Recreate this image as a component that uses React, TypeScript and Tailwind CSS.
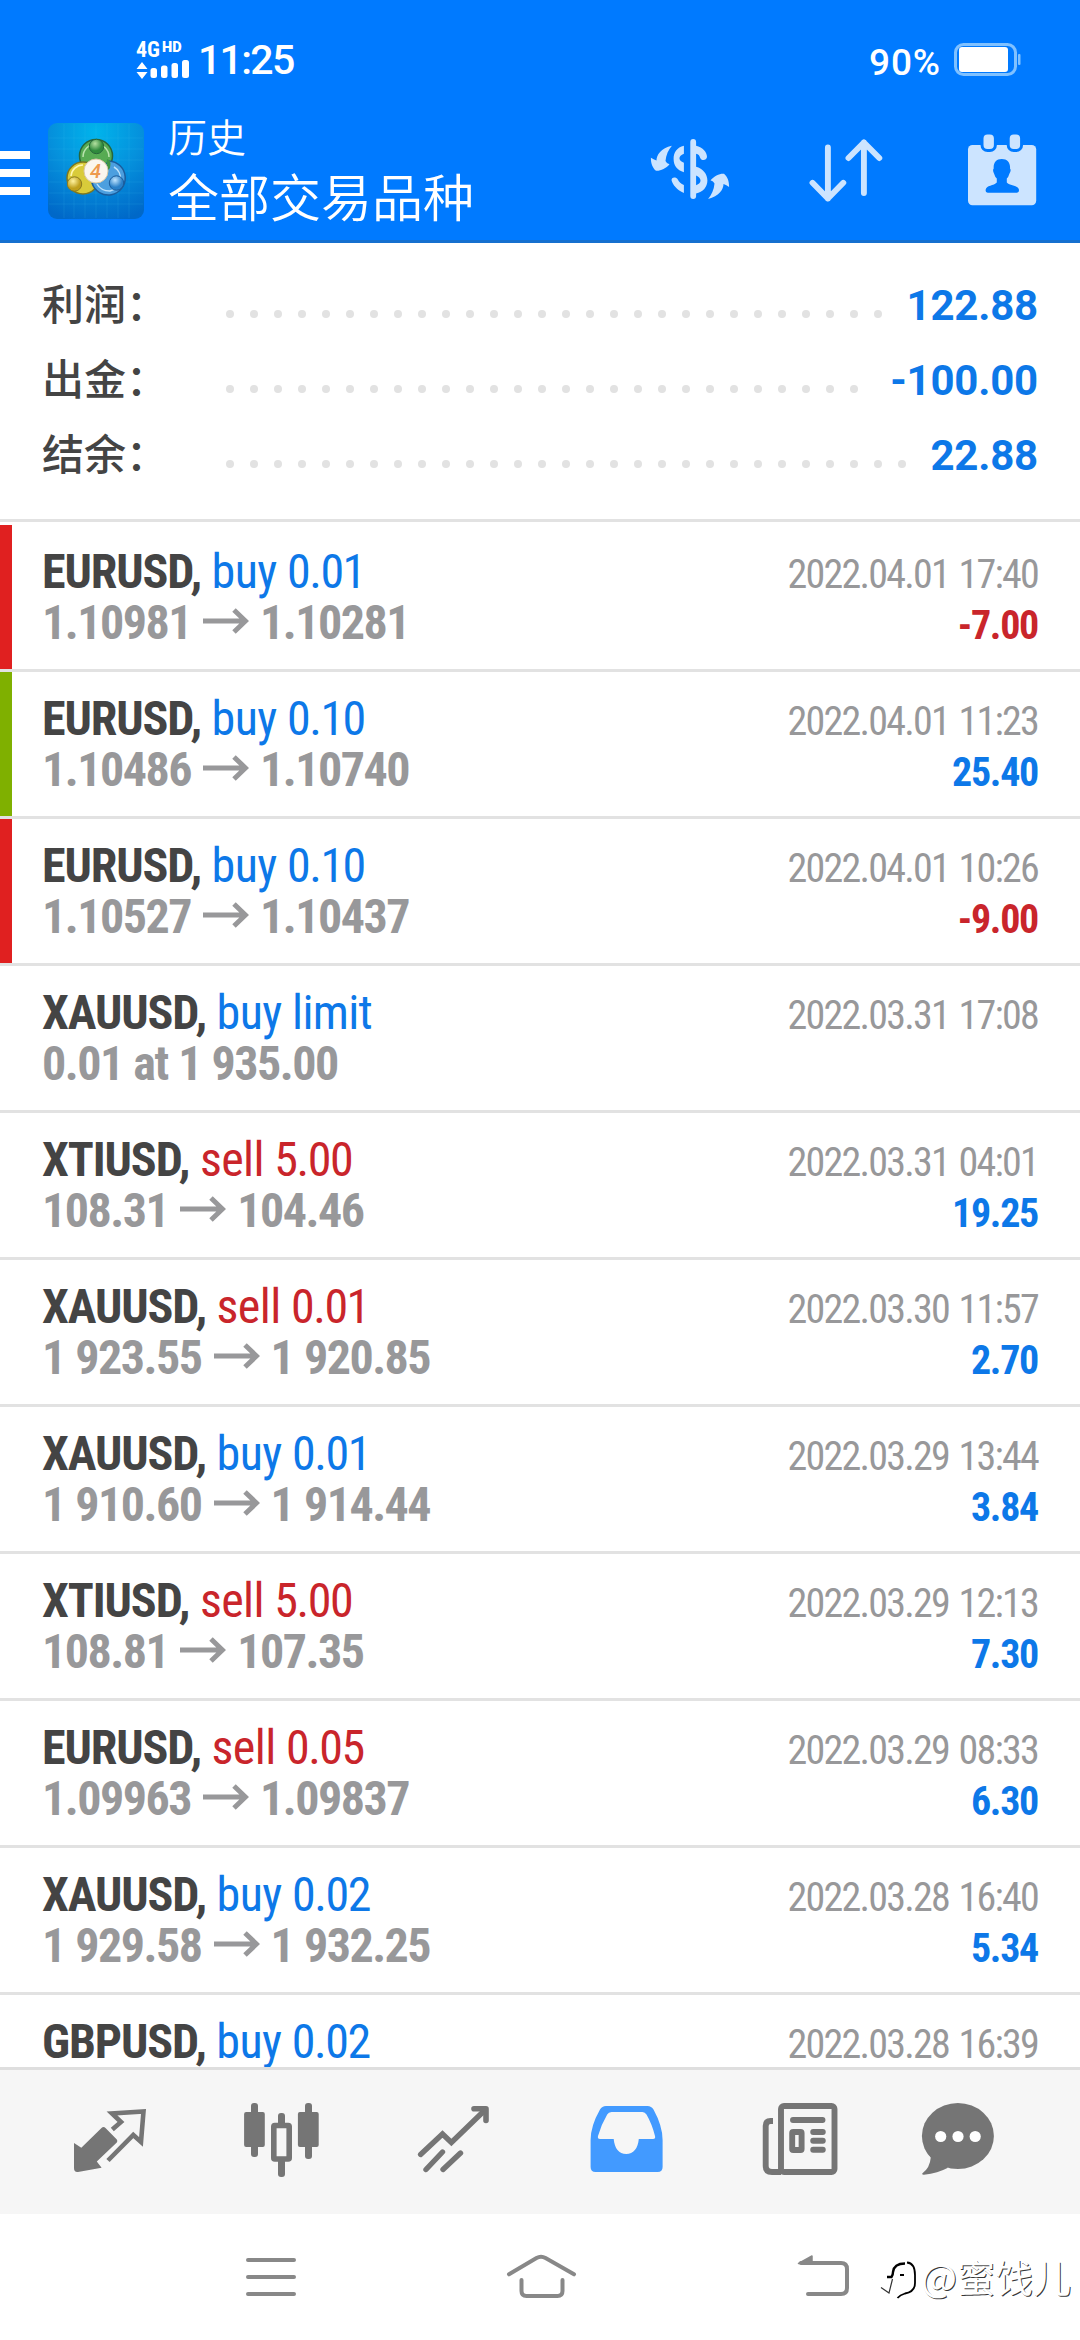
const summary = [
  { label: "利润：", value: "122.88" },
  { label: "出金：", value: "-100.00" },
  { label: "结余：", value: "22.88" },
];

const deals = [
  { symbol: "EURUSD", type: "buy", detail: "0.01", from: "1.10981", to: "1.10281", time: "2022.04.01 17:40", profit: "-7.00", mark: "loss" },
  { symbol: "EURUSD", type: "buy", detail: "0.10", from: "1.10486", to: "1.10740", time: "2022.04.01 11:23", profit: "25.40", mark: "win" },
  { symbol: "EURUSD", type: "buy", detail: "0.10", from: "1.10527", to: "1.10437", time: "2022.04.01 10:26", profit: "-9.00", mark: "loss" },
  { symbol: "XAUUSD", type: "buy", detail: "limit", from: "0.01 at 1 935.00", time: "2022.03.31 17:08" },
  { symbol: "XTIUSD", type: "sell", detail: "5.00", from: "108.31", to: "104.46", time: "2022.03.31 04:01", profit: "19.25" },
  { symbol: "XAUUSD", type: "sell", detail: "0.01", from: "1 923.55", to: "1 920.85", time: "2022.03.30 11:57", profit: "2.70" },
  { symbol: "XAUUSD", type: "buy", detail: "0.01", from: "1 910.60", to: "1 914.44", time: "2022.03.29 13:44", profit: "3.84" },
  { symbol: "XTIUSD", type: "sell", detail: "5.00", from: "108.81", to: "107.35", time: "2022.03.29 12:13", profit: "7.30" },
  { symbol: "EURUSD", type: "sell", detail: "0.05", from: "1.09963", to: "1.09837", time: "2022.03.29 08:33", profit: "6.30" },
  { symbol: "XAUUSD", type: "buy", detail: "0.02", from: "1 929.58", to: "1 932.25", time: "2022.03.28 16:40", profit: "5.34" },
  { symbol: "GBPUSD", type: "buy", detail: "0.02", time: "2022.03.28 16:39" },
];

type Deal = (typeof deals)[number];

function StatusBar() {
  return (
    <div className="flex h-[120px] items-start justify-between pl-[136px] pr-[59px] pt-[40px] font-[Roboto] text-white">
      <div className="flex">
        <div className="w-[54px] pt-[1px]">
          <div className="flex items-start leading-none">
            <span className="font-['Roboto_Condensed'] text-[22px] font-bold leading-[18px]">4G</span>
            <span className="ml-[2px] text-[14.5px] font-black leading-[14px]">HD</span>
          </div>
          <svg className="mt-[1px]" width="54" height="20" viewBox="0 0 54 20" fill="white">
            <path d="M6 2L11.5 9H.5ZM6 19L.5 12H11.5Z" />
            <rect x="14.5" y="8" width="6.5" height="10" rx="2.5" />
            <rect x="25" y="5.5" width="6.5" height="12.5" rx="2.5" />
            <rect x="35.5" y="3" width="6.5" height="15" rx="2.5" />
            <rect x="46" y="0" width="7" height="18" rx="2.5" />
          </svg>
        </div>
        <span className="ml-[8px] text-[41px] font-medium leading-[40px] tracking-[-1.7px]">11:25</span>
      </div>
      <div className="flex">
        <span className="mr-[12px] pt-[2px] text-[37px] font-medium leading-[42px] tracking-[0.9px]">90%</span>
        <svg width="68" height="40" viewBox="0 0 68 40" fill="none">
          <rect x="2.5" y="4.5" width="60" height="30" rx="8" stroke="#80c1ff" strokeWidth="3" />
          <rect x="6" y="7" width="49" height="25" rx="3" fill="white" />
          <rect x="65" y="14" width="2.5" height="11" rx="1" fill="#80c1ff" />
        </svg>
      </div>
    </div>
  );
}

function AppLogo() {
  return (
    <svg width="96" height="96" viewBox="0 0 96 96">
      <defs>
        <radialGradient id="bg" cx="50%" cy="10%" r="95%">
          <stop offset="0" stopColor="#00b4ec" />
          <stop offset="0.5" stopColor="#0590dc" />
          <stop offset="1" stopColor="#0068c8" />
        </radialGradient>
        <radialGradient id="green" cx="40%" cy="30%">
          <stop offset="0" stopColor="#b4e0a0" />
          <stop offset="1" stopColor="#2f8a3c" />
        </radialGradient>
        <radialGradient id="yellow" cx="40%" cy="30%">
          <stop offset="0" stopColor="#fff3a0" />
          <stop offset="1" stopColor="#bfa01c" />
        </radialGradient>
        <radialGradient id="blue" cx="40%" cy="30%">
          <stop offset="0" stopColor="#bfe4ff" />
          <stop offset="1" stopColor="#2a80c8" />
        </radialGradient>
      </defs>
      <rect width="96" height="96" rx="9" fill="url(#bg)" />
      <path
        d="M16 1V95M26 1V95M37 1V95M48 1V95M59 1V95M70 1V95M81 1V95M1 15H95M1 26H95M1 37H95M1 48H95M1 59H95M1 70H95M1 81H95"
        stroke="#4cc4f4"
        strokeOpacity="0.14"
      />
      <g strokeWidth="1.5">
        <circle cx="48" cy="33" r="16.5" fill="#57ab53" stroke="#27663a" />
        <path d="M35 34A13 13 0 0 1 61 34" fill="none" stroke="#b9e3ae" />
        <circle cx="35" cy="55" r="16" fill="#d9cb3a" stroke="#7d7720" />
        <path d="M23 53A12 12 0 0 1 35 42" fill="none" stroke="#fff7b0" />
        <path d="M61 38A17 17 0 1 1 44 60L52 47Z" fill="#4c9fdf" stroke="#1b5c9c" />
        <path d="M66 44A13 13 0 0 1 62 68Q53 68 49 61" fill="none" stroke="#bfe2fb" />
        <path d="M47 60Q52 52 58 47L59 36Q64 37 62 45" fill="#3f9445" stroke="none" />
      </g>
      <circle cx="48.5" cy="23.5" r="7.2" fill="url(#green)" stroke="#27663a" />
      <circle cx="26.5" cy="61" r="7.2" fill="url(#yellow)" stroke="#8a7a20" />
      <circle cx="68.5" cy="60" r="7.2" fill="url(#blue)" stroke="#1b5c9c" />
      <circle cx="48" cy="48" r="12" fill="#fbf6ee" stroke="#d8c8a8" />
      <text x="47.5" y="55" textAnchor="middle" fontSize="20" fontStyle="italic" fontWeight="500" fontFamily="Roboto, sans-serif" fill="#ee9a4d">
        4
      </text>
    </svg>
  );
}

function CurrencyIcon() {
  const arrow =
    "M29.9 22.7C19 25 14.5 32 14.5 37.5Q11.5 36.5 8.9 34.7C8.8 40 10.5 45 14 47.8C18 48.3 24 45.5 27.5 41.3Q24.5 40.5 23.5 38C24 32 26.5 26.5 29.9 22.7Z";
  return (
    <svg width="96" height="96" viewBox="0 0 96 96" fill="#cce4ff">
      <path d={arrow} />
      <path d={arrow} transform="rotate(180 48 49.3)" />
      <rect x="48.3" y="16" width="5.8" height="60" rx="2.9" />
      <path d="M41.9 22.7C35 24.5 31.6 29 31.6 35.8S35 47 41.9 49.3V39.7C36 37.5 36 33 41.9 30.8Z" />
      <path d="M54 22.7C61 24.5 65 29 65 34C64.5 38 59 38 58 34.5C57.5 32.5 56.5 31.5 54 30.8Z" />
      <path d="M54 43.7C61 45.5 65.4 51 65.4 57.5S61 69 54 70.5V62.3C60 60.5 60 55 54 52.6Z" />
      <path d="M41.9 70C35 67 31 62 29.6 57.5C29 54 34 53.5 35.8 56.5C37 58.8 39 60.8 41.9 62Z" />
    </svg>
  );
}

function SortIcon() {
  return (
    <svg width="96" height="96" viewBox="0 0 96 96" fill="none" stroke="#cce4ff" strokeWidth="5.9" strokeLinecap="round" strokeLinejoin="round">
      <path d="M29.9 24.5V75.5M14.5 59.8L29.9 75.5L45.3 59.8" />
      <path d="M65.9 70V19.5M50.5 35L65.9 19.5L81.3 35" />
    </svg>
  );
}

function CalendarIcon() {
  return (
    <svg width="96" height="96" viewBox="0 0 96 96" fill="#cce4ff">
      <rect x="14" y="22" width="68.2" height="60.3" rx="4.5" />
      <g stroke="#007aff" strokeWidth="3">
        <rect x="28" y="10" width="13.4" height="17.5" rx="5.5" />
        <rect x="54.2" y="10" width="13.4" height="17.5" rx="5.5" />
      </g>
      <path
        d="M47.8 36C53.5 36 56.5 40 56 45.5Q57.5 47 55.5 50.5Q54.5 54 52.8 55.5V59.5C56 63 64.5 62 65 67Q65 69.8 62.5 69.8H34Q31.6 69.8 31.6 67C32 62 40 63 42.8 59.5V55.5Q41 54 40 50.5Q38.3 47 39.7 45.5C39.2 40 42 36 47.8 36Z"
        fill="#007aff"
      />
    </svg>
  );
}

function Header() {
  return (
    <header className="flex h-[123px] items-start border-b-[3px] border-[#1670cf]">
      <div className="flex w-[30px] flex-col gap-[10px] pt-[31px]">
        <span className="h-[8px] bg-white" />
        <span className="h-[8px] bg-white" />
        <span className="h-[8px] bg-white" />
      </div>
      <div className="ml-[18px] pt-[3px]">
        <AppLogo />
      </div>
      <div className="ml-[24px] flex-1 font-['Noto_Sans_CJK_SC',sans-serif] font-[350] text-white">
        <p className="mt-[-9px] text-[39px] leading-[48px]">历史</p>
        <p className="mt-[6px] text-[51px] leading-[60px]">全部交易品种</p>
      </div>
      <div className="flex gap-[60px] pr-[30px] pt-[3px]">
        <CurrencyIcon />
        <SortIcon />
        <CalendarIcon />
      </div>
    </header>
  );
}

function Summary() {
  return (
    <section className="h-[279px] border-b-[3px] border-[#e2e2e2] pl-[42px] pr-[42px] pt-[25px]">
      {summary.map((row) => (
        <div key={row.label} className="flex h-[75px] items-center">
          <span className="mt-[-7px] w-[176px] font-['Noto_Sans_CJK_SC',sans-serif] text-[42px] font-medium leading-[68px] text-[#444]">
            {row.label}
          </span>
          <div className="mr-[11px] mt-[17px] flex h-[8px] flex-1 flex-wrap overflow-hidden">
            {Array.from({ length: 30 }, (_, i) => (
              <span key={i} className="flex h-[8px] w-[24px] justify-center">
                <span className="size-[8px] rounded-full bg-[#e2e2e2]" />
              </span>
            ))}
          </div>
          <span className="mt-[1px] font-[Roboto] text-[42px] font-bold leading-[74px] tracking-[-0.2px] text-[#0d78e8]">{row.value}</span>
        </div>
      ))}
    </section>
  );
}

function DealRow({ deal }: { deal: Deal }) {
  const strip =
    deal.mark === "loss" ? "bg-[#e02020]" : deal.mark === "win" ? "bg-[#7fb000]" : "";
  const typeColor = deal.type === "sell" ? "text-[#c9252b]" : "text-[#0d78e8]";
  const profitColor = deal.profit?.startsWith("-") ? "text-[#c9252b]" : "text-[#0d78e8]";
  const detailSpacing = deal.detail === "limit" ? "tracking-[-0.7px]" : "tracking-[-1.5px]";

  return (
    <li className="flex h-[147px] shrink-0 border-b-[3px] border-[#e2e2e2]">
      <span className={`w-[12px] ${strip}`} />
      <div className="flex-1 pl-[30px] pr-[42px] pt-[21px] leading-[51px]">
        <div className="flex h-[51px] items-baseline justify-between">
          <p className="text-[48px] tracking-[-0.6px]">
            <span className="font-bold text-[#444] tracking-[-1.1px]">{deal.symbol},</span>{" "}
            <span className={typeColor}>
              {deal.type} <span className={detailSpacing}>{deal.detail}</span>
            </span>
          </p>
          <time className="text-[40px] font-normal tracking-[-1.75px] text-[#98989a] [word-spacing:2px]">{deal.time}</time>
        </div>
        <div className="flex h-[51px] items-baseline justify-between">
          <p className="text-[48px] font-bold tracking-[-1.5px] text-[#98989a] [word-spacing:1px]">
            {deal.from}
            {deal.to && (
              <>
                <svg className="ml-[12px] mr-[11px] inline-block align-[5px]" width="46" height="26" viewBox="0 0 46 26" fill="none" stroke="#98989a" strokeWidth="5">
                  <path d="M0 13H43M31 2L42.5 13L31 24" />
                </svg>
                {deal.to}
              </>
            )}
          </p>
          <span className={`text-[40px] font-bold tracking-[-1.3px] ${profitColor}`}>{deal.profit}</span>
        </div>
      </div>
    </li>
  );
}

function TabBar() {
  return (
    <nav className="flex h-[147px] border-t-[3px] border-[#dedede] bg-[#f6f6f6] pl-[24px] text-[#757575]">
      {/* Quotes */}
      <svg width="172" height="144" viewBox="0 0 172 144">
        <path d="M50 73L57.3 77.7L77.5 58Q79.5 56 81.5 58L92.8 69.5Q94 70.8 92.8 72.5L72.8 91.5L77.6 97.7L54 102Q50 102.5 50 98Z" fill="currentColor" />
        <path d="M88.3 59.5L97 52L88 43.5L119.5 41.5L117 72L109.3 65L84 90.5" fill="none" stroke="currentColor" strokeWidth="4.6" />
      </svg>
      {/* Charts */}
      <svg width="172" height="144" viewBox="0 0 172 144" fill="currentColor">
        <rect x="55" y="33" width="7" height="54" rx="3" />
        <rect x="48.1" y="42" width="20.7" height="35" rx="2" />
        <rect x="109" y="33" width="7" height="56" rx="3" />
        <rect x="101.9" y="42" width="20.8" height="35" rx="2" />
        <rect x="82" y="43" width="7" height="15" rx="3" />
        <rect x="82" y="88" width="7" height="19" rx="3" />
        <rect x="77.8" y="55.5" width="15.4" height="33.5" rx="1" fill="none" stroke="currentColor" strokeWidth="5.6" />
      </svg>
      {/* Trade */}
      <svg width="172" height="144" viewBox="0 0 172 144" fill="none" stroke="currentColor" strokeWidth="5.4" strokeLinecap="round">
        <path d="M52.6 84.5L74.5 64L83.4 72.5L117 40" strokeLinejoin="miter" />
        <path d="M106 38.8H118V50.5" strokeWidth="5.6" strokeLinejoin="round" />
        <path d="M58 99.5L74.5 82M75 99.5L92.5 83" />
      </svg>
      {/* History */}
      <svg width="172" height="144" viewBox="0 0 172 144">
        <path
          fillRule="evenodd"
          d="M66 36H107.5Q111.5 36 113.5 39.5Q122.6 56 122.6 70V97Q122.6 102 117.6 102H55.6Q50.6 102 50.6 97V70Q50.6 56 60 39.5Q62 36 66 36ZM71.5 42Q68.5 42 67.2 44.5Q61 55 58 66Q57.3 69 60 69H73.7C74.5 78.5 79 84 86.2 84S98 78.5 98.8 69H113Q115.8 69 115 66Q112 54 106.5 44.5Q105 42 102.5 42Z"
          fill="#429aff"
        />
      </svg>
      {/* News */}
      <svg width="172" height="144" viewBox="0 0 172 144" fill="none" stroke="currentColor" strokeWidth="5.9">
        <rect x="69" y="36" width="53.5" height="66" rx="3" />
        <path d="M61 51H58.5Q53.7 51 53.7 56V96Q53.7 102 60 102H69" />
        <path d="M81 50H110.5M101.2 62H110.8M101.2 70.8H110.8M101.2 79.7H110.8" strokeLinecap="round" />
        <rect x="80.2" y="62" width="9.4" height="18" rx="1" />
      </svg>
      {/* Chat */}
      <svg width="172" height="144" viewBox="0 0 172 144">
        <ellipse cx="73.9" cy="66" rx="36" ry="33" fill="currentColor" />
        <path d="M42 80L46.8 87.3Q46 98 38.2 103.5Q38 105 40 104.8Q54 103 64 97.7Z" fill="currentColor" />
        <g fill="white">
          <circle cx="56.7" cy="66.5" r="5.6" />
          <circle cx="74" cy="66.5" r="5.6" />
          <circle cx="91.2" cy="66.5" r="5.6" />
        </g>
      </svg>
    </nav>
  );
}

function SystemNav() {
  return (
    <div className="relative flex h-[126px] gap-[190px] bg-white pl-[231px] pt-[39px]">
      <svg width="80" height="48" viewBox="0 0 80 48" stroke="#888" strokeWidth="4" strokeLinecap="round">
        <path d="M17 7H63M17 24H63M17 41H63" />
      </svg>
      <svg width="80" height="48" viewBox="0 0 80 48" fill="none" stroke="#888" strokeWidth="4" strokeLinecap="round">
        <path d="M8 21.3L35.5 5Q40 2.5 44.5 5L73 21.3M20.5 27V38Q20.5 43 25.5 43H56.5Q61.5 43 61.5 38V27" />
      </svg>
      <svg width="80" height="48" viewBox="0 0 80 48" fill="none" stroke="#888" strokeWidth="4" strokeLinecap="round">
        <path d="M30 10H70Q76 10 76 16V35Q76 41 70 41H37" />
        <path d="M27.5 10.5L41 3V10.5Z" fill="#888" strokeWidth="1.5" strokeLinejoin="round" />
      </svg>
      <div className="absolute left-[880px] top-[34px] flex items-center text-white">
        <svg width="41" height="56" viewBox="0 0 41 56" fill="none">
          <path d="M27 14.5C33 15 35 20 35 27V35C35 42 31 44.5 25 45.5Q20 47 17.5 50" stroke="black" strokeWidth="1.8" />
          <path d="M7 29H11.5Q13 27 13 24Q14 15.5 25 15.5" stroke="black" strokeWidth="2.4" />
          <path d="M20 27H24" stroke="black" strokeWidth="2" />
          <path d="M12.5 31L9 45L1 39.5" stroke="#333" strokeWidth="1.2" />
        </svg>
        <span className="whitespace-nowrap font-['Noto_Sans_CJK_SC',sans-serif] text-[38px] font-normal leading-[56px] [text-shadow:1px_1px_0.5px_rgba(0,0,0,0.8)]">
          @蜜饯儿
        </span>
      </div>
    </div>
  );
}

export default function App() {
  return (
    <div className="flex h-[2340px] w-[1080px] flex-col overflow-hidden bg-white">
      <div className="bg-[#007aff]">
        <StatusBar />
        <Header />
      </div>
      <Summary />
      <ul className="flex min-h-0 flex-1 flex-col overflow-hidden pt-[3px] font-['Roboto_Condensed',Roboto,sans-serif]">
        {deals.map((deal) => (
          <DealRow key={deal.time} deal={deal} />
        ))}
      </ul>
      <TabBar />
      <SystemNav />
    </div>
  );
}
